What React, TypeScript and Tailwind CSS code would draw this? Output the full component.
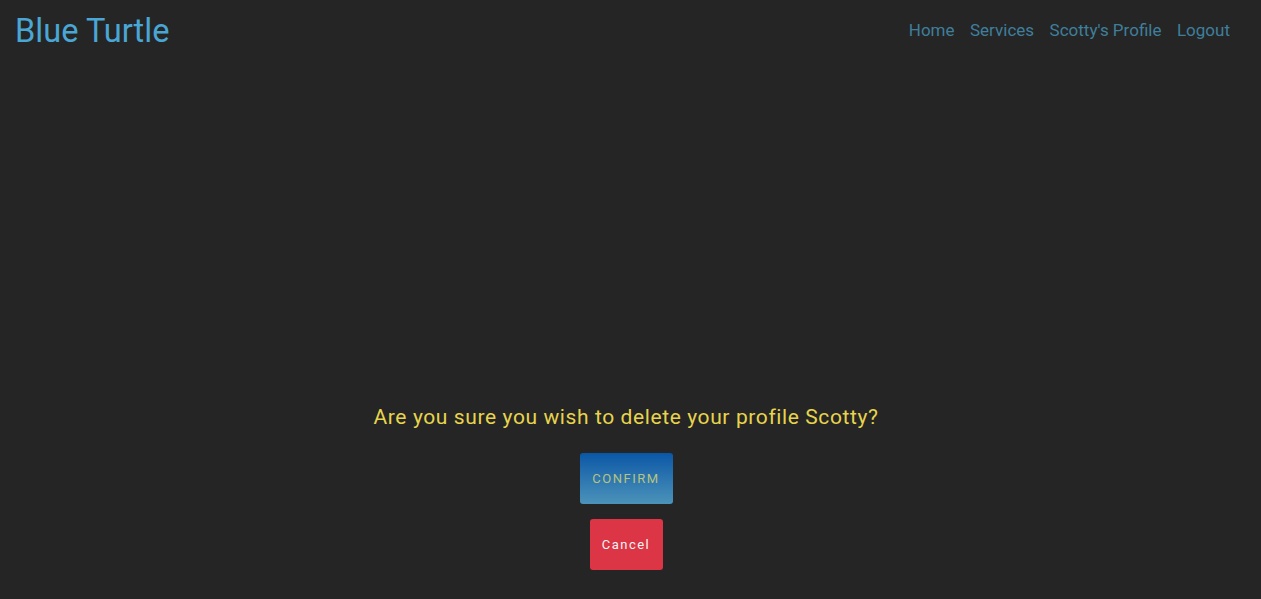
export default function App() {
  return (
    <div className="min-h-[599px] bg-[#252525]" style={{ fontFamily: "Roboto, 'Liberation Sans', sans-serif" }}>
      <header className="flex items-center justify-between pl-[15px] pr-[31px] h-[62px]">
        <div className="text-[32.6px] text-[#4aa6d4] leading-none">Blue Turtle</div>
        <nav className="flex gap-[15.5px] text-[17px] text-[#3f7f9c]">
          <a>Home</a>
          <a>Services</a>
          <a>Scotty's Profile</a>
          <a>Logout</a>
        </nav>
      </header>
      <main className="flex flex-col items-center pt-[339px] pr-[9px]">
        <p className="text-[21px] tracking-[0.6px] text-[#e8d44d] leading-[32px]">Are you sure you wish to delete your profile Scotty?</p>
        <button className="mt-[20px] w-[93px] h-[51px] rounded-[3px] bg-gradient-to-b from-[#0857a6] to-[#4b93b9] text-[#b7c47f] text-[13px] tracking-[1.5px]">CONFIRM</button>
        <button className="mt-[15px] w-[73px] h-[51px] rounded-[3px] bg-[#dc3545] text-[#f4f4f4] text-[13px] tracking-[1.5px]">Cancel</button>
      </main>
    </div>
  );
}
